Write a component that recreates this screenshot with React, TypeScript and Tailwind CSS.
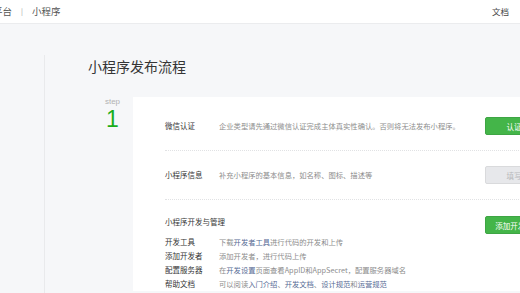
const font = "font-['Noto_Sans_CJK_SC','Noto_Sans',sans-serif]";

function Btn({ label, disabled }: { label: string; disabled?: boolean }) {
  return (
    <div
      className={`h-[18px] min-w-[58px] shrink-0 rounded-[2px] px-[7px] text-center text-[7.5px] leading-[18px] ${
        disabled ? "border border-[#d9dadc] bg-[#e7e8eb] text-[#b8b9bb]" : "border border-[#3ea544] bg-[#44b549] text-white"
      }`}
    >
      {label}
    </div>
  );
}

const devRows = [
  { label: "开发工具", desc: [{ t: "下载" }, { t: "开发者工具", link: true }, { t: "进行代码的开发和上传" }] },
  { label: "添加开发者", desc: [{ t: "添加开发者，进行代码上传" }] },
  {
    label: "配置服务器",
    desc: [{ t: "在" }, { t: "开发设置", link: true }, { t: "页面查看AppID和AppSecret，配置服务器域名" }],
  },
  {
    label: "帮助文档",
    desc: [
      { t: "可以阅读" },
      { t: "入门介绍", link: true },
      { t: "、" },
      { t: "开发文档", link: true },
      { t: "、" },
      { t: "设计规范", link: true },
      { t: "和" },
      { t: "运营规范", link: true },
    ],
  },
];

export default function App() {
  return (
    <div className={`h-[293px] w-[520px] overflow-hidden bg-[#f6f7f9] ${font}`}>
      {/* Header */}
      <div className="flex h-[24px] items-center justify-between border-b border-[#ebecee] bg-white pr-[11px] text-[9.5px] text-[#555]">
        <div className="ml-[-45px] flex items-center whitespace-nowrap">
          <span>微信公众平台</span>
          <span className="mx-[9px] text-[7px] text-[#999]">|</span>
          <span>小程序</span>
        </div>
        <span className="text-[8.5px] text-[#444]">文档</span>
      </div>

      <div className="flex">
        {/* Left rail */}
        <div className="mt-[31px] h-[300px] w-[45px] shrink-0 border-r border-[#e9eaec]" />

        <div className="shrink-0 pl-[43px] pt-[32px]">
          <h1 className="text-[14px] leading-[20px] text-[#353535]">小程序发布流程</h1>

          <div className="mt-[21px] flex">
            <div className="flex w-[45px] shrink-0 flex-col items-center pl-[4px] pt-[0px]">
              <span className="text-[8px] leading-[10px] text-[#b2b2b2] font-['Liberation_Sans',sans-serif]">step</span>
              <span className="text-[23px] font-light leading-[24px] text-[#1aad19] font-['Liberation_Sans',sans-serif]">1</span>
            </div>

            <div className="w-[440px] shrink-0 bg-white pl-[32px] pr-[30px] pt-[5px]">
              {/* Row 1 */}
              <div className="flex items-center border-b border-dotted border-[#e1e2e4] py-[15px]">
                <span className="w-[54px] shrink-0 text-[7.5px] text-[#353535]">微信认证</span>
                <span className="flex-1 text-[7.3px] text-[#8d8d8d]">
                  企业类型请先通过微信认证完成主体真实性确认。否则将无法发布小程序。
                </span>
                <Btn label="认证" />
              </div>

              {/* Row 2 */}
              <div className="flex items-center border-b border-dotted border-[#e1e2e4] py-[15px]">
                <span className="w-[54px] shrink-0 text-[7.5px] text-[#353535]">小程序信息</span>
                <span className="flex-1 text-[7.3px] text-[#8d8d8d]">补充小程序的基本信息，如名称、图标、描述等</span>
                <Btn label="填写" disabled />
              </div>

              {/* Row 3 */}
              <div className="pt-[16px]">
                <div className="flex items-start justify-between">
                  <span className="text-[7.5px] leading-[12px] text-[#353535]">小程序开发与管理</span>
                  <Btn label="添加开发者" />
                </div>
                <div className="mt-[1px] flex flex-col">
                  {devRows.map((r) => (
                    <div key={r.label} className="flex h-[14px] items-center">
                      <span className="w-[54px] shrink-0 text-[7.5px] text-[#353535]">{r.label}</span>
                      <span className="text-[7.3px] text-[#8d8d8d]">
                        {r.desc.map((d, i) => (
                          <span key={i} className={d.link ? "text-[#576b95]" : ""}>
                            {d.t}
                          </span>
                        ))}
                      </span>
                    </div>
                  ))}
                </div>
              </div>
            </div>
          </div>
        </div>
      </div>
    </div>
  );
}
